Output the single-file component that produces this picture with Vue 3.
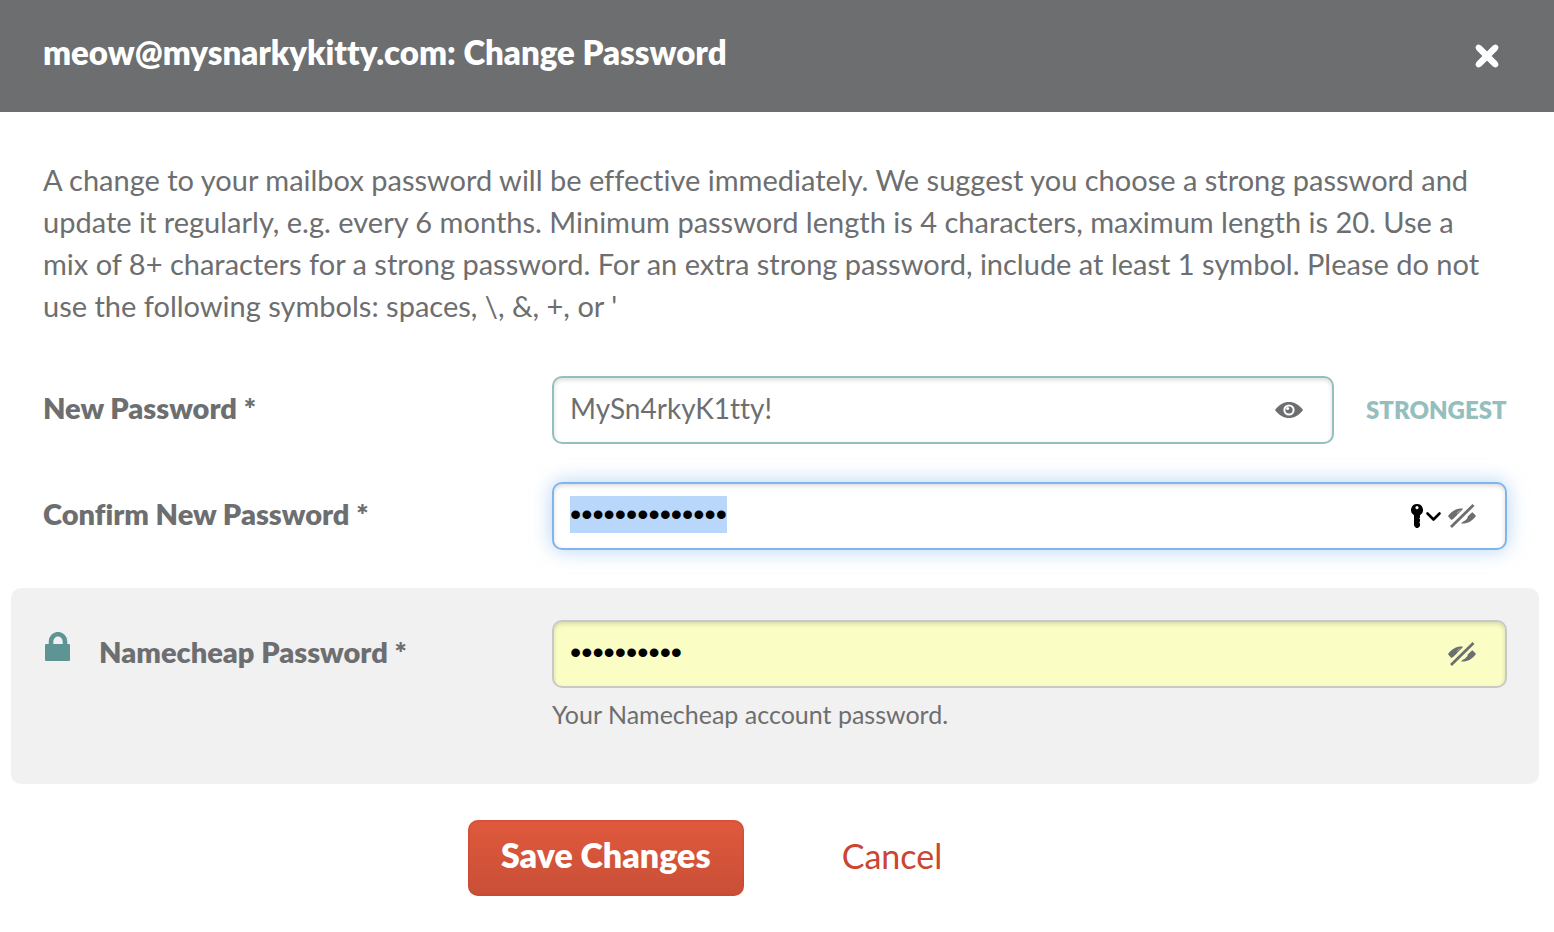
<script setup>
import { ref, onMounted } from 'vue'

const newPassword = ref('MySn4rkyK1tty!')
const confirmPassword = ref('MySn4rkyK1tty!')
const accountPassword = ref('namecheap1')
const confirmInput = ref(null)

onMounted(() => {
  confirmInput.value.focus()
  confirmInput.value.select()
})
</script>

<template>
  <main class="dialog" role="dialog" aria-labelledby="dialog-title">
    <header class="header">
      <h1 id="dialog-title" class="title">meow@mysnarkykitty.com: Change Password</h1>
      <button class="close" type="button" aria-label="Close">
        <svg width="26" height="28" viewBox="0 0 26 28" aria-hidden="true">
          <path d="M4.500 5.500L21.500 22.500M21.500 5.500L4.500 22.500" fill="none" stroke="#fff" stroke-width="6.400" />
          <path d="M4.500 5.500L21.500 22.500M21.500 5.500L4.500 22.500" fill="none" stroke="#fff" stroke-width="5.600" stroke-linecap="round" />
        </svg>
      </button>
    </header>

    <form class="body" @submit.prevent>
      <p class="intro">
        A change to your mailbox password will be effective immediately. We suggest you choose a strong password and<br />
        update it regularly, e.g. every 6 months. Minimum password length is 4 characters, maximum length is 20. Use a<br />
        mix of 8+ characters for a strong password. For an extra strong password, include at least 1 symbol. Please do not<br />
        use the following symbols: spaces, \, &amp;, +, or '
      </p>

      <div class="row">
        <label class="label" for="new-password">New Password *</label>
        <div class="field-group">
          <div class="field field-strong">
            <input id="new-password" v-model="newPassword" class="input" type="text" autocomplete="off" />
            <button class="icon" type="button" aria-label="Hide password">
              <svg width="28" height="24" viewBox="0 0 28 24" aria-hidden="true">
                <path d="M0 12C4 6.500 9 4 14 4S24 6.500 28 12C24 17.500 19 20 14 20S4 17.500 0 12Z" fill="#6d6e70" />
                <circle cx="14" cy="12" r="5.600" fill="#fff" />
                <circle cx="14" cy="12" r="3.600" fill="#6d6e70" />
                <circle cx="12.700" cy="10.500" r="1.500" fill="#fff" />
              </svg>
            </button>
          </div>
          <output class="strength" for="new-password">STRONGEST</output>
        </div>
      </div>

      <div class="row">
        <label class="label" for="confirm-password">Confirm New Password *</label>
        <div class="field field-focus">
          <input id="confirm-password" ref="confirmInput" v-model="confirmPassword" class="input masked" type="password" autocomplete="off" />
          <button class="icon key" type="button" aria-label="Saved passwords">
            <svg width="32" height="26" viewBox="0 0 32 26" aria-hidden="true">
              <path fill-rule="evenodd" d="M7 1a6 6 0 0 0-3 11.200V22.500L6 25H8L10 23V20.500L9.300 19.500L10 18.500V16.500L9.300 15.500L10 14.500V12.200A6 6 0 0 0 7 1ZM7 3a1.600 1.600 0 1 1 0 3.200A1.600 1.600 0 0 1 7 3Z" fill="#000" />
              <path d="M17.500 10.500L23.500 16.500L29.500 10.500" fill="none" stroke="#000" stroke-width="2.600" stroke-linecap="round" stroke-linejoin="round" />
            </svg>
          </button>
          <button class="icon" type="button" aria-label="Show password">
            <svg width="28" height="24" viewBox="0 0 28 24" aria-hidden="true">
              <path d="M0 12C4 6.500 9 4 15 4.500L13.500 6.200C10.500 6.500 8.500 9 8.500 11.500L3.500 16C2.200 15 1 13.500 0 12ZM28 12C24 17.500 19 20 13 19.500L14.800 17.700C18 17.500 19.700 14.500 19.700 12.500L24.200 8.200C25.800 9.200 27 10.500 28 12Z" fill="#6d6e70" />
              <path d="M8 10L13.500 5.500L15 5L5 15L3 15.500ZM20 14L24.500 9L25 8.500L25 11L15 19L14 19Z" fill="#6d6e70" />
              <path d="M3 23L25.500 1" stroke="#6d6e70" stroke-width="2.800" />
            </svg>
          </button>
        </div>
      </div>

      <section class="panel">
        <label class="label label-lock" for="account-password">
          <svg class="lock" width="26" height="30" viewBox="0 0 26 30" aria-hidden="true">
            <path d="M6 13V9.500A7 7.300 0 0 1 20 9.500V13" fill="none" stroke="#5f9494" stroke-width="4.600" />
            <rect y="12" width="25" height="17" rx="1" fill="#5f9494" />
          </svg>
          Namecheap Password *
        </label>
        <div>
          <div class="field field-filled">
            <input id="account-password" v-model="accountPassword" class="input masked" type="password" autocomplete="off" aria-describedby="account-hint" />
            <button class="icon" type="button" aria-label="Show password">
              <svg width="28" height="24" viewBox="0 0 28 24" aria-hidden="true">
                <path d="M0 12C4 6.500 9 4 15 4.500L13.500 6.200C10.500 6.500 8.500 9 8.500 11.500L3.500 16C2.200 15 1 13.500 0 12ZM28 12C24 17.500 19 20 13 19.500L14.800 17.700C18 17.500 19.700 14.500 19.700 12.500L24.200 8.200C25.800 9.200 27 10.500 28 12Z" fill="#6d6e70" />
                <path d="M8 10L13.500 5.500L15 5L5 15L3 15.500ZM20 14L24.500 9L25 8.500L25 11L15 19L14 19Z" fill="#6d6e70" />
                <path d="M3 23L25.500 1" stroke="#6d6e70" stroke-width="2.800" />
              </svg>
            </button>
          </div>
          <p id="account-hint" class="hint">Your Namecheap account password.</p>
        </div>
      </section>

      <div class="actions">
        <button class="save" type="submit">Save Changes</button>
        <a class="cancel" href="#">Cancel</a>
      </div>
    </form>
  </main>
</template>

<style>
body {
  background: #fff;
}
</style>

<style scoped>
.dialog {
  color: #6d6e70;
  font-family: Lato, "Open Sans", sans-serif;
  font-variant-ligatures: none;
}
.header {
  display: flex;
  align-items: center;
  justify-content: space-between;
  box-sizing: border-box;
  min-height: 112px;
  padding: 0 54px 0 43px;
  background: #6d6e70;
  color: #fff;
}
.title {
  margin: 0 0 8px;
  font-size: 33px;
  line-height: 42px;
  font-weight: 800;
}
button {
  font-family: inherit;
  border: 0;
  padding: 0;
  background: none;
  cursor: pointer;
}
svg {
  display: block;
}
.body {
  padding: 47px 15px 36px 11px;
}
.intro {
  margin: 0 0 49px;
  padding-left: 32px;
  font-size: 29px;
  line-height: 42px;
  white-space: nowrap;
}
.row,
.panel {
  display: grid;
  grid-template-columns: 509px 1fr;
  padding: 0 32px;
}
.row {
  margin-bottom: 38px;
}
.label {
  display: flex;
  align-items: center;
  height: 64px;
  font-size: 29px;
  line-height: 40px;
  font-weight: 800;
}
.label-lock {
  gap: 28px;
}
.lock {
  margin: 0 0 10px 2px;
}
.field-group {
  display: flex;
  align-items: center;
  gap: 32px;
}
.field {
  display: flex;
  flex: 1;
  align-items: center;
  gap: 6px;
  box-sizing: border-box;
  height: 68px;
  padding: 0 29px 0 16px;
  border: 2px solid #c8c8c8;
  border-radius: 10px;
  background: #fff;
  box-shadow: inset 0 2px 4px rgba(0, 0, 0, 0.14);
}
.field-strong {
  border-color: #95bfbe;
}
.field-focus {
  border-color: #80b5ec;
  box-shadow: inset 0 2px 4px rgba(0, 0, 0, 0.14), 0 0 20px rgba(128, 181, 236, 0.6);
}
.field-filled {
  background: #fafdc4;
}
.input {
  flex: 1;
  min-width: 0;
  height: 60px;
  padding: 0 0 4px;
  box-sizing: border-box;
  border: 0;
  outline: 0;
  background: transparent;
  color: #6d6e70;
  font-family: inherit;
  font-size: 28px;
  font-variant-ligatures: none;
}
.masked {
  color: #000;
  font-family: "Liberation Sans", Arial, sans-serif;
  font-size: 32px;
}
.masked::selection {
  background: #b9d7fb;
  color: #000;
}
.strength {
  width: 141px;
  font-size: 24px;
  line-height: 32px;
  font-weight: 800;
  color: #95bfbe;
}
.panel {
  padding-top: 32px;
  padding-bottom: 54px;
  border-radius: 10px;
  background: #f1f1f1;
}
.hint {
  margin: 10px 0 0;
  font-size: 25px;
  line-height: 32px;
}
.actions {
  display: flex;
  align-items: center;
  justify-content: center;
  gap: 98px;
  margin-top: 36px;
  padding-right: 140px;
}
.save {
  width: 276px;
  height: 76px;
  padding-bottom: 8px;
  border-radius: 10px;
  background: linear-gradient(#e0593d, #c84f37);
  box-shadow: inset 0 0 0 2px rgba(200, 70, 45, 0.35);
  color: #fff;
  font-size: 34px;
  font-weight: 800;
}
.cancel {
  margin-bottom: 4px;
  color: #cb4530;
  font-size: 34px;
  line-height: 42px;
  text-decoration: none;
}
</style>
